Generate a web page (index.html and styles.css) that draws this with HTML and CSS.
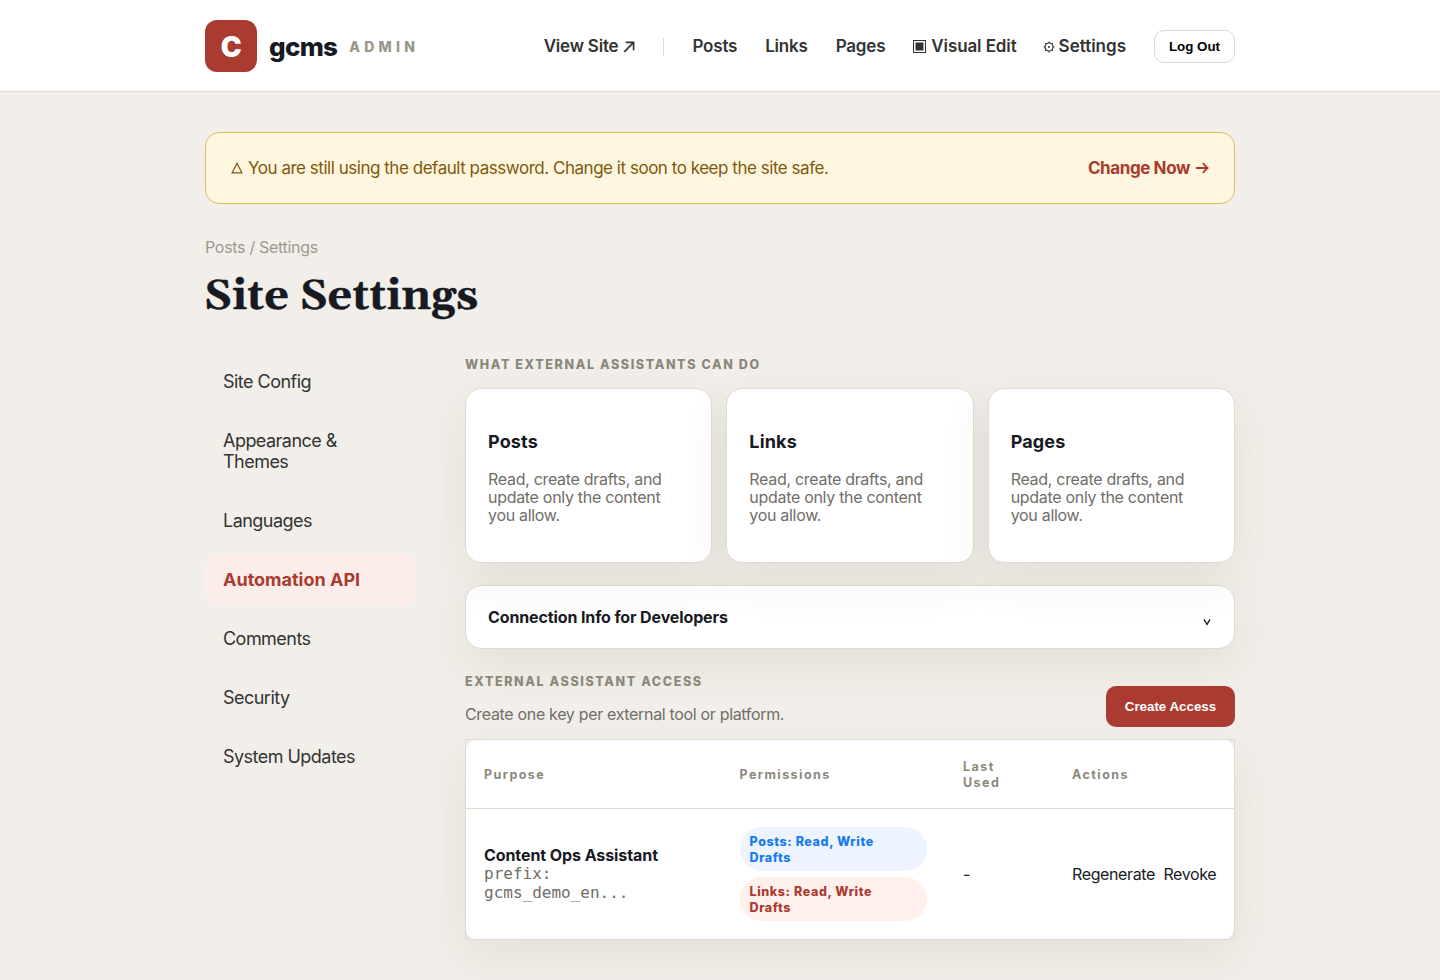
FILE: index.html
```
<!DOCTYPE html>
<html lang="en">
  <head>
    <meta charset="UTF-8">
    <title>Site Settings - gcms</title>
    <link rel="stylesheet" href="styles.css">
  </head>
  <body>
    <header class="topbar">
      <div class="container topbar-inner">
        <a class="brand" href="#">
          <span class="brand-mark">C</span>
          <span class="brand-name">gcms</span>
          <span class="brand-tag">ADMIN</span>
        </a>
        <nav class="nav">
          <a href="#">View Site
            <svg class="arrow-out" viewBox="0 0 12 12"><path d="M1.2 10.8 10.4 1.6M2.8 1.4h7.8v7.8"/></svg>
          </a>
          <span class="nav-divider"></span>
          <a href="#">Posts</a>
          <a href="#">Links</a>
          <a href="#">Pages</a>
          <a href="#" class="nav-edit">
            <svg class="icon-square" viewBox="0 0 13 13"><rect x=".5" y=".5" width="12" height="12"/><rect class="fill" x="3" y="3" width="7" height="7"/></svg>
            Visual Edit
          </a>
          <a href="#" class="nav-settings">
            <svg class="icon-gear" viewBox="0 0 12 12"><circle cx="6" cy="6" r="4"/><circle class="fill" cx="6" cy="6" r=".4"/><path d="M6 .6v1.4M6 10v1.4M.6 6h1.4M10 6h1.4M2.2 2.2l1 1M8.8 8.8l1 1M2.2 9.8l1-1M8.8 3.2l1-1"/></svg>
            Settings
          </a>
          <button class="btn-logout">Log Out</button>
        </nav>
      </div>
    </header>

    <main class="container">
      <div class="notice">
        <svg class="icon-warn" viewBox="0 0 12 12"><path d="M6 1.2 10.9 10.9H1.1Z"/></svg>
        <span class="notice-text">You are still using the default password. Change it soon to keep the site safe.</span>
        <a href="#" class="notice-link">Change Now
          <svg class="arrow-right" viewBox="0 0 14 12"><path d="M.8 6h11.8M7.8 1.2 12.6 6 7.8 10.8"/></svg>
        </a>
      </div>

      <div class="breadcrumb">Posts / Settings</div>
      <h1>Site Settings</h1>

      <div class="layout">
        <aside class="sidebar">
          <a href="#">Site Config</a>
          <a href="#">Appearance &amp;<br>Themes</a>
          <a href="#">Languages</a>
          <a href="#" class="active">Automation API</a>
          <a href="#">Comments</a>
          <a href="#">Security</a>
          <a href="#">System Updates</a>
        </aside>

        <section class="content">
          <h2 class="section-title">What external assistants can do</h2>
          <div class="cards">
            <div class="card">
              <h3>Posts</h3>
              <p>Read, create drafts, and<br>update only the content<br>you allow.</p>
            </div>
            <div class="card">
              <h3>Links</h3>
              <p>Read, create drafts, and<br>update only the content<br>you allow.</p>
            </div>
            <div class="card">
              <h3>Pages</h3>
              <p>Read, create drafts, and<br>update only the content<br>you allow.</p>
            </div>
          </div>

          <div class="panel">
            <span class="panel-title">Connection Info for Developers</span>
            <svg class="chevron" viewBox="0 0 8 8"><path d="M1 1.4 4 6.4 7 1.4"/></svg>
          </div>

          <div class="access-head">
            <div>
              <h2 class="section-title">External assistant access</h2>
              <p class="access-text">Create one key per external tool or platform.</p>
            </div>
            <button class="btn-primary">Create Access</button>
          </div>

          <table class="keys">
            <colgroup>
              <col class="col-purpose">
              <col class="col-perms">
              <col class="col-used">
              <col class="col-actions">
            </colgroup>
            <thead>
              <tr>
                <th>Purpose</th>
                <th>Permissions</th>
                <th>Last<br>Used</th>
                <th>Actions</th>
              </tr>
            </thead>
            <tbody>
              <tr>
                <td>
                  <strong class="key-name">Content Ops Assistant</strong>
                  <code>prefix:<br>gcms_demo_en...</code>
                </td>
                <td>
                  <div class="badges">
                    <span class="badge badge-blue">Posts: Read, Write<br>Drafts</span>
                    <span class="badge badge-red">Links: Read, Write<br>Drafts</span>
                  </div>
                </td>
                <td>-</td>
                <td>
                  <div class="actions">
                    <a href="#">Regenerate</a>
                    <a href="#">Revoke</a>
                  </div>
                </td>
              </tr>
            </tbody>
          </table>
        </section>
      </div>
    </main>
  </body>
</html>
```
FILE: styles.css
```
* {
  box-sizing: border-box;
}

body {
  margin: 0;
  height: 980px;
  overflow: hidden;
  background: #f2efea;
  color: #171923;
  font-family: Inter, "Liberation Sans", sans-serif;
  font-size: 16px;
  letter-spacing: -0.3px;
  line-height: 18px;
}

a {
  color: inherit;
  text-decoration: none;
}

h1, h2, h3, p {
  margin: 0;
}

svg {
  fill: none;
  stroke: currentColor;
  flex: none;
}

.fill {
  fill: currentColor;
}

.container {
  width: 1030px;
  margin: 0 auto;
}

/* header */

.topbar {
  height: 92px;
  background: #fff;
  border-bottom: 1px solid #dddacf;
}

.topbar-inner {
  height: 91px;
  display: flex;
  align-items: center;
  justify-content: space-between;
}

.brand {
  display: flex;
  align-items: center;
  gap: 12px;
}

.brand-mark {
  width: 52px;
  height: 52px;
  margin-top: 1px;
  border-radius: 12px;
  background: #a93b30;
  color: #fff;
  font-size: 28px;
  font-weight: 900;
  line-height: 55px;
  text-align: center;
}

.brand-name {
  font-size: 26px;
  font-weight: 800;
  letter-spacing: -0.7px;
  line-height: 32px;
  margin-top: 2px;
}

.brand-tag {
  color: #9a9788;
  font-size: 14px;
  font-weight: 800;
  letter-spacing: 4.2px;
  margin-top: 3px;
}

.nav {
  display: flex;
  align-items: center;
  gap: 28px;
  padding-top: 2px;
  color: #333;
  font-size: 17px;
  font-weight: 600;
  letter-spacing: -0.2px;
  line-height: 21px;
}

.nav a {
  display: flex;
  align-items: center;
  gap: 5px;
  white-space: nowrap;
}

.nav .nav-edit {
  margin-right: -2px;
  letter-spacing: -0.1px;
}

.nav .nav-settings {
  gap: 4px;
  letter-spacing: 0;
}

.nav-divider {
  width: 1px;
  height: 18px;
  background: #dddacf;
}

.arrow-out {
  width: 12px;
  height: 12px;
  stroke-width: 1.7;
}

.icon-square {
  width: 13px;
  height: 13px;
  margin-top: -1px;
}

.icon-gear {
  width: 12px;
  height: 12px;
  stroke-width: 1.2;
}

.btn-logout {
  width: 81px;
  height: 33px;
  padding: 0;
  border: 1px solid #dddacf;
  border-radius: 10px;
  background: #fff;
  color: #000;
  font: 700 13.33px "Liberation Sans", Arial, sans-serif;
}

/* default password notice */

.notice {
  display: flex;
  align-items: center;
  height: 72px;
  margin-top: 40px;
  padding: 0 25px;
  border: 1px solid #dfbd58;
  border-radius: 14px;
  background: #fff6df;
  color: #80590c;
  font-size: 17px;
}

.icon-warn {
  width: 12px;
  height: 12px;
  margin-right: 5px;
  stroke-width: 1.2;
}

.notice-text {
  letter-spacing: -0.47px;
}

.notice-link {
  display: flex;
  align-items: center;
  gap: 5px;
  margin-left: auto;
  color: #a93b30;
  font-weight: 700;
  letter-spacing: -0.4px;
}

.arrow-right {
  width: 14px;
  height: 12px;
  stroke-width: 1.8;
}

.breadcrumb {
  margin-top: 34px;
  color: #9c998d;
}

h1 {
  margin: 15px 0 0 -1px;
  font-family: Georgia, Gelasio, "Liberation Serif", serif;
  font-size: 43px;
  font-weight: 700;
  letter-spacing: 0;
  line-height: 52px;
  -webkit-text-stroke: 0.4px currentColor;
}

.layout {
  display: flex;
  gap: 50px;
  margin-top: 33px;
}

/* sidebar */

.sidebar {
  display: flex;
  flex-direction: column;
  gap: 8px;
  width: 210px;
  flex: none;
}

.sidebar a {
  padding: 15px 18px;
  border-radius: 14px;
  color: #333;
  font-size: 18px;
  letter-spacing: -0.53px;
  line-height: 21px;
}

.sidebar .active {
  background: #fcedeb;
  color: #a93b30;
  font-weight: 700;
  letter-spacing: 0;
}

/* content */

.content {
  width: 770px;
}

.section-title {
  height: 16px;
  color: #8b887b;
  font-size: 12.5px;
  font-weight: 800;
  letter-spacing: 1.62px;
  line-height: 18px;
  text-transform: uppercase;
}

.cards {
  display: grid;
  grid-template-columns: repeat(3, 1fr);
  gap: 14px;
  margin-top: 16px;
}

.card,
.panel {
  border: 1px solid #dedbd0;
  border-radius: 16px;
  background: #fff;
  box-shadow: 0 16px 48px rgba(80, 70, 30, 0.09);
}

.card {
  height: 175px;
  padding: 42px 22px 0;
}

.card h3 {
  font-size: 18px;
  font-weight: 700;
  letter-spacing: 0.15px;
  line-height: 21px;
}

.card p {
  margin-top: 18px;
  color: #706e68;
}

.panel {
  display: flex;
  align-items: center;
  justify-content: space-between;
  height: 64px;
  margin-top: 22px;
  padding: 0 23px 0 22px;
}

.panel-title {
  font-weight: 650;
  letter-spacing: -0.12px;
}

.chevron {
  width: 8px;
  height: 8px;
  margin-top: 9px;
  stroke-width: 1.3;
}

.access-head {
  display: flex;
  align-items: flex-end;
  justify-content: space-between;
  margin-top: 24px;
}

.access-text {
  margin: 16px 0 4px;
  color: #706e68;
  letter-spacing: -0.33px;
}

.btn-primary {
  width: 129px;
  height: 41px;
  padding: 0;
  border: 0;
  border-radius: 10px;
  background: #a93b30;
  color: #fff;
  font: 700 13.33px "Liberation Sans", Arial, sans-serif;
}

/* access keys */

.keys {
  width: 770px;
  margin-top: 12px;
  table-layout: fixed;
  border: 1px solid #dedbd0;
  border-collapse: collapse;
  border-radius: 14px;
  background: #fff;
  box-shadow: 0 16px 48px rgba(80, 70, 30, 0.09);
}

.col-purpose {
  width: 256px;
}

.col-perms {
  width: 223.5px;
}

.col-used {
  width: 109px;
}

.keys th,
.keys td {
  padding: 18px;
  text-align: left;
  vertical-align: middle;
}

.keys th {
  height: 69px;
  padding: 19px 18px 17px;
  border-bottom: 1px solid #dedbd0;
  color: #8b887b;
  font-size: 12.5px;
  font-weight: 650;
  letter-spacing: 1.45px;
  line-height: 16px;
}

.key-name {
  display: block;
  font-weight: 650;
  letter-spacing: -0.08px;
}

code {
  display: block;
  color: #706e68;
  font-family: "DejaVu Sans Mono", monospace;
  font-size: 16px;
  letter-spacing: 0;
  line-height: 19px;
}

.badges {
  display: flex;
  flex-direction: column;
  gap: 6px;
}

.badge {
  padding: 7px 10px 5px;
  border-radius: 22px;
  font-size: 12.5px;
  font-weight: 800;
  letter-spacing: 0.6px;
  line-height: 16px;
}

.badge-blue {
  background: #edf4ff;
  color: #147af3;
}

.badge-red {
  background: #fff0ee;
  color: #a93b30;
}

.actions {
  display: flex;
  gap: 8.5px;
  letter-spacing: -0.38px;
}
```
